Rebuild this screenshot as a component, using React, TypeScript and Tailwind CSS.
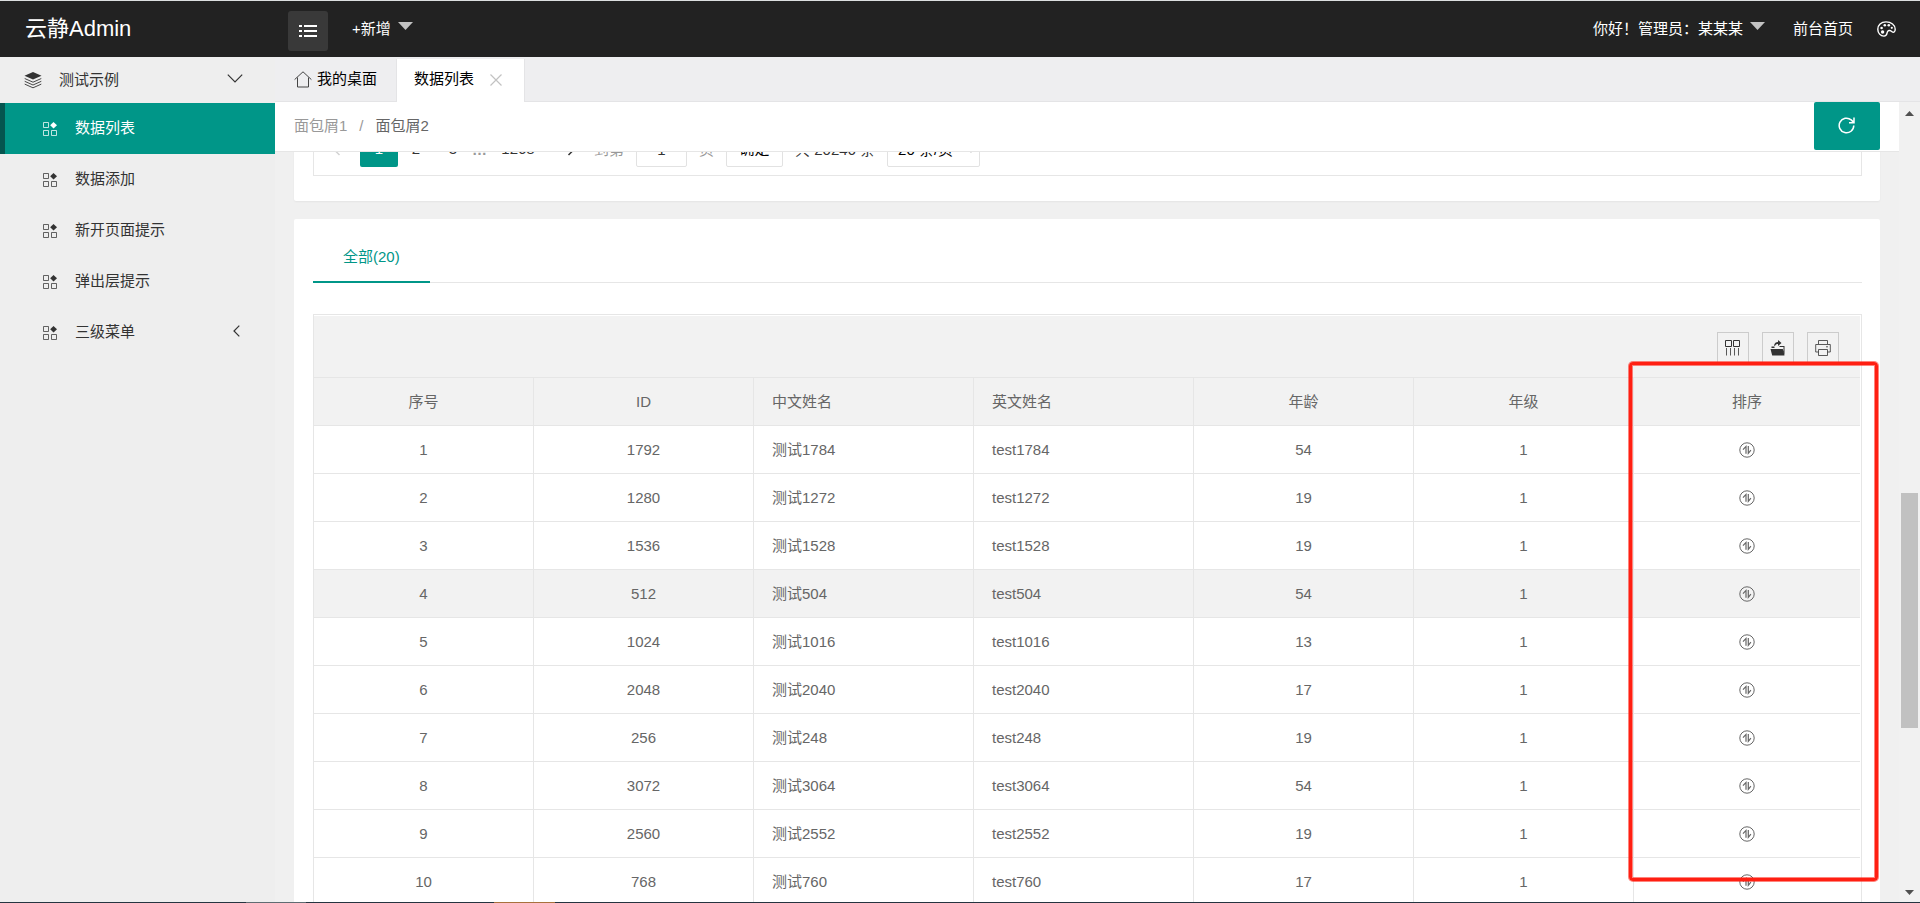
import React from "react";

const rows = [
  [1, 1792, "测试1784", "test1784", 54],
  [2, 1280, "测试1272", "test1272", 19],
  [3, 1536, "测试1528", "test1528", 19],
  [4, 512, "测试504", "test504", 54],
  [5, 1024, "测试1016", "test1016", 13],
  [6, 2048, "测试2040", "test2040", 17],
  [7, 256, "测试248", "test248", 19],
  [8, 3072, "测试3064", "test3064", 54],
  [9, 2560, "测试2552", "test2552", 19],
  [10, 768, "测试760", "test760", 17],
] as const;

const menu = ["数据列表", "数据添加", "新开页面提示", "弹出层提示", "三级菜单"];

function GridIcon() {
  return (
    <svg width="14" height="14" viewBox="0 0 14 14" fill="none" stroke="currentColor" aria-hidden="true">
      <path d="M.5.5h5v5h-5zM.5 8.5h5v5h-5zM8.5 8.5h5v5h-5z" strokeOpacity=".75" />
      <path d="M10.5 0L14 3.2 10.5 6.6 7.2 3.2z" fill="currentColor" stroke="none" />
    </svg>
  );
}

function SortIcon() {
  return (
    <svg width="16" height="16" viewBox="0 0 16 16" fill="none" stroke="currentColor" aria-hidden="true">
      <circle cx="8" cy="8" r="7.2" />
      <path d="M7 11.8V4.4L4 7.6M9.3 4v7.4l2.6-3.2" strokeWidth="1.2" />
    </svg>
  );
}

function Caret() {
  return (
    <svg width="15" height="8" viewBox="0 0 15 8" fill="#c2c2c2" aria-hidden="true">
      <path d="M0 0h15L7.5 8z" />
    </svg>
  );
}

function Header() {
  return (
    <header className="flex h-[57px] shrink-0 items-center border-t border-[#dcdfe0] bg-[#222] text-[15px] text-white">
      <a href="#" className="w-[288px] shrink-0 pl-[25px] text-[22px] leading-7">云静Admin</a>
      <button type="button" aria-label="切换菜单" className="mt-1 flex h-10 w-10 items-center justify-center rounded-[3px] bg-[#393939]">
        <svg width="18" height="14" viewBox="0 0 18 14" fill="#fff" aria-hidden="true">
          <path d="M0 1h3v2H0zM5 1h13v2H5zM0 6h3v2H0zM5 6h13v2H5zM0 11h3v2H0zM5 11h13v2H5z" />
        </svg>
      </button>
      <button type="button" className="ml-6 flex items-center gap-[7px]">
        <span>+新增</span>
        <span className="pb-1.5"><Caret /></span>
      </button>
      <nav className="ml-auto flex items-center pr-6">
        <button type="button" className="flex items-center gap-[7px]">
          <span>你好！管理员：某某某</span>
          <span className="pb-1.5"><Caret /></span>
        </button>
        <a href="#" className="ml-7">前台首页</a>
        <button type="button" aria-label="主题" className="ml-6">
          <svg width="19" height="16" viewBox="0 0 19 16" fill="none" stroke="#fff" strokeWidth="1.4" aria-hidden="true">
            <path d="M9 .9C4 .9.8 4.200.8 8.200c0 3.900 2.700 6.900 6.200 6.900 3.600 0 2.600-3 3.600-4.600 1.200-1.900 3.200-.7 4.400.2 1.600 1.200 3.200.3 3.200-2.500C18.200 3.900 14.200.9 9 .9z" />
            <g fill="#fff" stroke="none">
              <circle cx="5.600" cy="11" r="1.700" /><circle cx="4.600" cy="7" r="1.300" />
              <circle cx="7.800" cy="4.200" r="1.300" /><circle cx="11.800" cy="4.200" r="1.300" /><circle cx="14.800" cy="6.800" r="1.100" />
            </g>
          </svg>
        </button>
      </nav>
    </header>
  );
}

function Sidebar() {
  return (
    <aside className="w-[275px] shrink-0 bg-[#eee] text-[15px] text-[#333]">
      <button type="button" className="flex h-[46px] w-full items-center pl-6 pr-8">
        <svg width="18" height="17" viewBox="0 0 18 17" fill="none" stroke="currentColor" aria-hidden="true">
          <path d="M9 0l8.500 3.800L9 7.600.5 3.800z" fill="currentColor" stroke="none" />
          <path d="M.7 6.500L9 10.200l8.300-3.700M.7 9.300L9 13l8.300-3.700M.7 12.100L9 15.800l8.300-3.700" strokeWidth=".9" />
        </svg>
        <span className="ml-[17px]">测试示例</span>
        <svg className="mb-1 ml-auto" width="16" height="9" viewBox="0 0 16 9" fill="none" stroke="currentColor" strokeWidth="1.2" aria-hidden="true">
          <path d="M.8.7L8 8 15.200.7" />
        </svg>
      </button>
      <ul>
        {menu.map((label, i) => (
          <li key={label}>
            <a
              href="#"
              className={
                i === 0
                  ? "flex h-[51px] items-center border-l-[5px] border-[#05554f] bg-[#009688] pl-[38px] pr-[35px] text-white"
                  : "flex h-[51px] items-center border-l-[5px] border-transparent pl-[38px] pr-[35px]"
              }
            >
              <GridIcon />
              <span className="ml-[18px]">{label}</span>
              {i === 4 && (
                <svg className="mb-1 ml-auto" width="7" height="12" viewBox="0 0 7 12" fill="none" stroke="currentColor" strokeWidth="1.200" aria-hidden="true">
                  <path d="M6.300.6L1 6l5.300 5.400" />
                </svg>
              )}
            </a>
          </li>
        ))}
      </ul>
    </aside>
  );
}

function Pager() {
  return (
    <div className="flex h-11 items-start border-x border-b border-[#e6e6e6] pl-[18px] text-[15px] text-[#333]">
      <button type="button" aria-label="上一页" className="flex h-[35px] w-7 items-center pl-px text-[#d2d2d2]">
        <svg width="8" height="12" viewBox="0 0 8 12" fill="none" stroke="currentColor" strokeWidth="1.500" aria-hidden="true"><path d="M6.500 1L1.500 6l5 5" /></svg>
      </button>
      <button type="button" className="h-[35px] w-[38px] rounded-[2px] bg-[#009688] text-white">1</button>
      <button type="button" className="h-[35px] w-9">2</button>
      <button type="button" className="h-[35px] w-[38px]">3</button>
      <span className="w-[13px] text-center font-bold leading-[35px] text-[#999]">…</span>
      <button type="button" className="h-[35px] w-[66px]">1268</button>
      <button type="button" aria-label="下一页" className="flex h-[35px] w-[43px] items-center pl-4">
        <svg width="8" height="12" viewBox="0 0 8 12" fill="none" stroke="currentColor" strokeWidth="1.500" aria-hidden="true"><path d="M1.500 1l5 5-5 5" /></svg>
      </button>
      <label htmlFor="page" className="leading-[35px] text-[#999]">到第</label>
      <input id="page" defaultValue="1" className="ml-3 h-[35px] w-[51px] rounded-[2px] border border-[#e2e2e2] text-center" />
      <span className="ml-3 leading-[35px] text-[#999]">页</span>
      <button type="button" className="ml-3 h-[35px] w-[57px] rounded-[2px] border border-[#e2e2e2] text-black">确定</button>
      <span className="ml-3 leading-[35px]">共 20246 条</span>
      <select aria-label="每页条数" className="ml-3 h-[35px] w-[93px] rounded-[2px] border border-[#e2e2e2] bg-white pl-1.5 text-black">
        <option>20 条/页</option>
      </select>
    </div>
  );
}

const toolButton = "flex h-8 w-8 items-center justify-center border border-[#ccc] text-[#333]";

function Toolbar() {
  return (
    <div className="flex h-[62px] justify-end gap-[13px] border-b border-[#e6e6e6] bg-[#f2f2f2] pr-[21px] pt-4">
      <button type="button" aria-label="筛选列" className={toolButton}>
        <svg width="16" height="16" viewBox="0 0 16 16" fill="none" stroke="currentColor" aria-hidden="true">
          <path d="M.5.5h6v6h-6zM8.500.5h6v6h-6z" />
          <path d="M1.500 8v7.500M5.500 8v7.500M9.500 8v7.500M13.500 8v7.500" strokeOpacity=".8" />
        </svg>
      </button>
      <button type="button" aria-label="导出" className={toolButton}>
        <svg width="16" height="16" viewBox="0 0 16 16" fill="currentColor" aria-hidden="true">
          <path d="M.5 9h12.300l1.700 6.500H2.200zM14.500 15V6H9.500v1h4v5zM1.500 8V6.500h3V8zM4 5.500C4.500 3 6 2 8 2V0l3.500 3L8 6V4C6.500 4 5.500 4.500 5 6z" />
        </svg>
      </button>
      <button type="button" aria-label="打印" className={toolButton}>
        <svg width="16" height="16" viewBox="0 0 16 16" fill="none" stroke="currentColor" strokeOpacity=".8" aria-hidden="true">
          <path d="M3.500 4V.5h9V4M3.500 12H.7V4.500h14.600V12h-2.800M3.500 9.500h9v6h-9zM11 6.800h2" />
        </svg>
      </button>
    </div>
  );
}

function DataTable() {
  const head = "h-12 border-b border-r border-[#e6e6e6] px-[18px] pt-px font-normal last:border-r-0";
  const cell = "h-12 border-b border-r border-[#e6e6e6] px-[18px] pt-px text-center";
  const leftCell = "h-12 border-b border-r border-[#e6e6e6] px-[18px] pt-px text-left";
  return (
    <table className="w-full table-fixed border-separate border-spacing-0 text-[15px] text-[#666]">
      <colgroup>
        {[0, 1, 2, 3, 4, 5].map((n) => (
          <col key={n} className="w-[220px]" />
        ))}
        <col />
      </colgroup>
      <thead className="bg-[#f2f2f2]">
        <tr>
          {["序号", "ID", "中文姓名", "英文姓名", "年龄", "年级", "排序"].map((h, i) => (
            <th key={h} className={head + (i === 2 || i === 3 ? " text-left" : " text-center")}>{h}</th>
          ))}
        </tr>
      </thead>
      <tbody>
        {rows.map(([n, id, zh, en, age]) => (
          <tr key={n} className={n === 4 ? "bg-[#f2f2f2]" : "bg-white"}>
            <td className={cell}>{n}</td>
            <td className={cell}>{id}</td>
            <td className={leftCell}>{zh}</td>
            <td className={leftCell}>{en}</td>
            <td className={cell}>{age}</td>
            <td className={cell}>1</td>
            <td className="h-12 border-b border-[#e6e6e6]">
              <button type="button" aria-label="排序" className="mx-auto block"><SortIcon /></button>
            </td>
          </tr>
        ))}
      </tbody>
    </table>
  );
}

export default function App() {
  return (
    <div className="relative flex h-screen flex-col overflow-hidden bg-[#f0f0f0] font-['Liberation_Sans','Noto_Sans_CJK_SC',sans-serif]">
      <Header />
      <div className="flex min-h-0 flex-1">
        <Sidebar />
        <main className="flex min-w-0 flex-1 flex-col">
          <nav className="flex h-[45px] shrink-0 border-b border-[#e4e4e6] bg-[#eeeef0] text-[15px] text-black">
            <a href="#" className="flex items-center gap-[5px] pl-[19px] pr-[19px]">
              <svg width="18" height="17" viewBox="0 0 18 17" fill="none" stroke="#444" aria-hidden="true">
                <path d="M.6 8.600L9 .8l8.400 7.800M3.500 6.500v9.500h11V6.500" />
              </svg>
              我的桌面
            </a>
            <div className="mt-[2px] flex h-[43px] items-center border-x border-[#e4e4e6] bg-white pb-0.5 pl-[17px] pr-[22px]">
              <span>数据列表</span>
              <button type="button" aria-label="关闭" className="ml-4">
                <svg width="12" height="12" viewBox="0 0 12 12" stroke="#c2c2c2" strokeWidth="1.200" aria-hidden="true"><path d="M.5.5l11 11M11.500.5l-11 11" /></svg>
              </button>
            </div>
          </nav>
          <div className="flex min-h-0 flex-1">
            <div className="flex min-w-0 flex-1 flex-col">
              <div className="flex h-[50px] shrink-0 justify-between border-b border-[#e6e6e6] bg-white pl-[19px] pr-[19px] text-[15px] leading-[48px]">
                <div className="flex gap-3 text-[#999]">
                  <a href="#">面包屑1</a>
                  <span>/</span>
                  <span className="text-[#666]">面包屑2</span>
                </div>
                <button type="button" aria-label="刷新" className="flex h-12 w-[66px] items-center justify-center rounded-[2px] bg-[#009688] pb-0.5 pr-0.5">
                  <svg width="17" height="17" viewBox="0 0 17 17" fill="none" stroke="#fff" strokeWidth="1.500" aria-hidden="true">
                    <path d="M15.800 8.500a7.300 7.300 0 1 1-2.600-5.600L16 5.600M16 .5v5.200h-5" />
                  </svg>
                </button>
              </div>
              <div className="min-h-0 flex-1 overflow-hidden px-[19px]">
                <section className="-mt-5 rounded-[2px] bg-white pb-[25px] pl-[19px] pr-[18px] shadow-[0_1px_2px_rgba(0,0,0,0.05)]">
                  <Pager />
                </section>
                <section className="mt-[18px] rounded-[2px] bg-white pb-5 pl-[19px] pr-[18px] pt-[13px]">
                  <div className="flex h-[51px] border-b border-[#e6e6e6] text-[15px]">
                    <button type="button" className="-mb-px h-[51px] border-b-2 border-[#009688] px-[30px] pt-0.5 text-[#009688]">全部(20)</button>
                  </div>
                  <div className="mt-[31px] border border-[#e6e6e6] pr-px pt-px">
                    <Toolbar />
                    <DataTable />
                  </div>
                </section>
              </div>
            </div>
            <div aria-hidden="true" className="flex w-[21px] shrink-0 flex-col items-center bg-[#f1f1f1] pb-[7px] pt-[9px]">
              <svg width="9" height="5" viewBox="0 0 9 5" fill="#505050"><path d="M0 5h9L4.500 0z" /></svg>
              <div className="flex-[377]" />
              <div className="w-[17px] flex-[235] bg-[#c1c1c1]" />
              <div className="flex-[162]" />
              <svg width="9" height="5" viewBox="0 0 9 5" fill="#505050"><path d="M0 0h9L4.500 5z" /></svg>
            </div>
          </div>
        </main>
      </div>
      <div aria-hidden="true" className="flex h-px shrink-0 bg-[#253440]">
        <div className="ml-[246px] w-[60px] bg-[#5f6c72]" />
        <div className="ml-[188px] w-[61px] bg-[#a8713d]" />
      </div>
      <div className="pointer-events-none absolute right-[42px] top-[362px] h-[519px] w-[249px] rounded-[4px] border-3 border-[#ff1f12] shadow-[0_0_0_1px_rgba(255,31,18,0.55),inset_0_0_0_1px_rgba(255,31,18,0.55)]" />
    </div>
  );
}
